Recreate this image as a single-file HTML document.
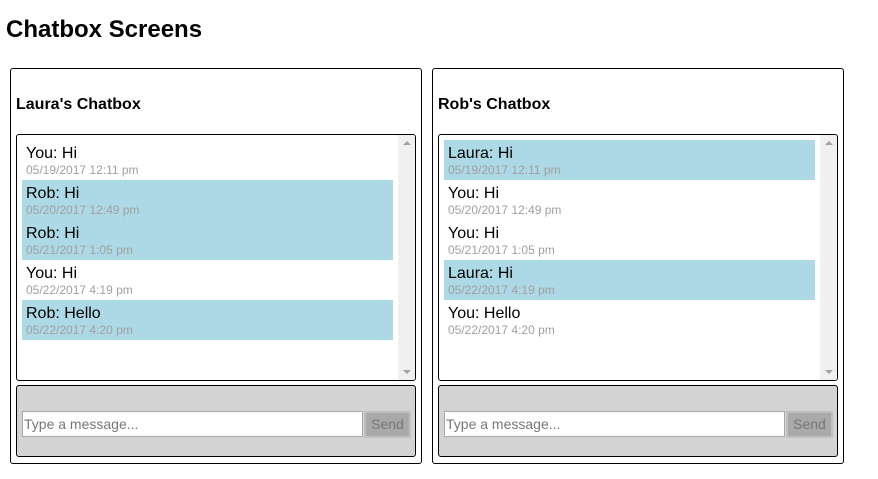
<!DOCTYPE html>
<html><head><style>
*{box-sizing:border-box;margin:0;padding:0}
body{width:878px;height:479px;background:#fff;font-family:"Liberation Sans",Arial,sans-serif;position:relative;overflow:hidden}
h1{position:absolute;left:6px;top:16px;font-size:24px;font-weight:bold}
.panel{position:absolute;top:68px;width:412px;height:396px;border:1px solid #000;border-radius:3px}
.panel h2{position:absolute;left:5px;top:27px;font-size:16px;font-weight:bold}
.list{position:absolute;left:5px;top:65px;width:400px;height:247px;border:1px solid #000;border-radius:3px;overflow:hidden}
.sb{position:absolute;right:0;top:0;width:17px;height:100%;background:#f0f0f0}
.sb .up{position:absolute;left:5px;top:6px;border-left:4px solid transparent;border-right:4px solid transparent;border-bottom:4px solid #a3a3a3}
.sb .dn{position:absolute;left:5px;bottom:6px;border-left:4px solid transparent;border-right:4px solid transparent;border-top:4px solid #a3a3a3}
.msg{position:absolute;left:5px;width:371px;height:40px;padding:5px 4px 0}
.msg.b{background:#add8e6}
.msg .t{font-size:16px;color:#000;line-height:18px}
.msg .d{font-size:12px;color:#a0a0a0;line-height:14px}
.inp{position:absolute;left:5px;top:316px;width:400px;height:72px;background:#d3d3d3;border:1px solid #000;border-radius:3px}
.box{position:absolute;left:5px;top:25px;width:341px;height:26px;background:#fff;border:1px solid #a9a9a9;font-size:14px;color:#777;padding:4px 1px;line-height:16px}
.btn{position:absolute;left:347px;top:25px;width:47px;height:27px;background:#a9a9a9;border:2px solid #c0c0c0;font-size:14px;color:#777;text-align:center;line-height:22px}
</style></head><body>
<h1>Chatbox Screens</h1>
<div class="panel" style="left:10px">
<h2>Laura's Chatbox</h2>
<div class="list">
<div class="msg" style="top:5px"><div class="t">You: Hi</div><div class="d">05/19/2017 12:11 pm</div></div>
<div class="msg b" style="top:45px"><div class="t">Rob: Hi</div><div class="d">05/20/2017 12:49 pm</div></div>
<div class="msg b" style="top:85px"><div class="t">Rob: Hi</div><div class="d">05/21/2017 1:05 pm</div></div>
<div class="msg" style="top:125px"><div class="t">You: Hi</div><div class="d">05/22/2017 4:19 pm</div></div>
<div class="msg b" style="top:165px"><div class="t">Rob: Hello</div><div class="d">05/22/2017 4:20 pm</div></div>
<div class="sb"><div class="up"></div><div class="dn"></div></div>
</div>
<div class="inp"><div class="box">Type a message...</div><div class="btn">Send</div></div>
</div>
<div class="panel" style="left:432px">
<h2>Rob's Chatbox</h2>
<div class="list">
<div class="msg b" style="top:5px"><div class="t">Laura: Hi</div><div class="d">05/19/2017 12:11 pm</div></div>
<div class="msg" style="top:45px"><div class="t">You: Hi</div><div class="d">05/20/2017 12:49 pm</div></div>
<div class="msg" style="top:85px"><div class="t">You: Hi</div><div class="d">05/21/2017 1:05 pm</div></div>
<div class="msg b" style="top:125px"><div class="t">Laura: Hi</div><div class="d">05/22/2017 4:19 pm</div></div>
<div class="msg" style="top:165px"><div class="t">You: Hello</div><div class="d">05/22/2017 4:20 pm</div></div>
<div class="sb"><div class="up"></div><div class="dn"></div></div>
</div>
<div class="inp"><div class="box">Type a message...</div><div class="btn">Send</div></div>
</div>
</body></html>
